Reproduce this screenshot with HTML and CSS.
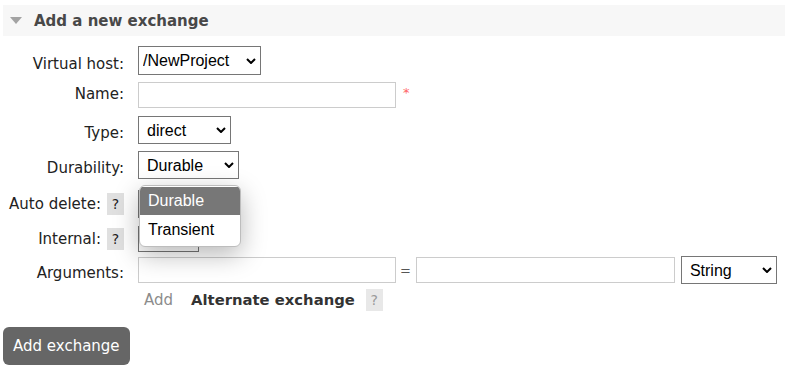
FILE: index.html
```html
<!DOCTYPE html>
<html lang="en">
<head>
    <meta charset="UTF-8">
    <meta name="viewport" content="width=device-width, initial-scale=1.0">
    <title>Exchanges - Add a new exchange</title>
    <link rel="stylesheet" href="styles.css">
</head>
<body>
    <div class="section">
        <div class="section-title">
            <svg class="toggle" width="12" height="7" viewBox="0 0 12 7"><polygon points="0,0 12,0 6,7" fill="#a3a3a3"/></svg>
            <h2>Add a new exchange</h2>
        </div>

        <form class="form">
            <label class="label label-low" for="vhost">Virtual host:</label>
            <div class="field">
                <span class="select">
                    <select id="vhost" class="w-vhost"><option>/NewProject</option></select>
                    <svg class="chevron" width="10" height="6" viewBox="0 0 10 6"><polyline points="1,1 5,5 9,1"/></svg>
                </span>
            </div>

            <label class="label label-high" for="name">Name:</label>
            <div class="field">
                <input type="text" id="name" class="text">
                <span class="mandatory">*</span>
            </div>

            <label class="label label-low" for="type">Type:</label>
            <div class="field">
                <span class="select">
                    <select id="type" class="w-type"><option>direct</option><option>fanout</option><option>headers</option><option>topic</option></select>
                    <svg class="chevron" width="10" height="6" viewBox="0 0 10 6"><polyline points="1,1 5,5 9,1"/></svg>
                </span>
            </div>

            <label class="label label-low" for="durable">Durability:</label>
            <div class="field">
                <span class="select">
                    <select id="durable" class="w-durable"><option>Durable</option><option>Transient</option></select>
                    <svg class="chevron" width="10" height="6" viewBox="0 0 10 6"><polyline points="1,1 5,5 9,1"/></svg>
                    <!-- open option list -->
                    <ul class="popup">
                        <li class="selected">Durable</li>
                        <li>Transient</li>
                    </ul>
                </span>
            </div>

            <div class="label">
                <label for="autodelete">Auto delete:</label>
                <span class="help">?</span>
            </div>
            <div class="field">
                <select id="autodelete" class="w-bool"><option>No</option><option>Yes</option></select>
            </div>

            <div class="label">
                <label for="internal">Internal:</label>
                <span class="help">?</span>
            </div>
            <div class="field">
                <select id="internal" class="w-bool w-short"><option>No</option><option>Yes</option></select>
            </div>

            <label class="label label-low" for="arg-key">Arguments:</label>
            <div class="field">
                <input type="text" id="arg-key" class="text">
                <span class="equals">=</span>
                <input type="text" id="arg-value" class="text">
                <span class="select">
                    <select id="arg-type" class="w-argtype"><option>String</option><option>Number</option><option>Boolean</option><option>List</option></select>
                    <svg class="chevron" width="10" height="6" viewBox="0 0 10 6"><polyline points="1,1 5,5 9,1"/></svg>
                </span>
            </div>

            <div></div>
            <div class="field add-row">
                <span class="add-link">Add</span>
                <span class="arg-name">Alternate exchange</span>
                <span class="help help-light">?</span>
            </div>
        </form>

        <button class="button" type="button">Add exchange</button>
    </div>
</body>
</html>
```

FILE: styles.css
```css
body {
    margin: 0;
    padding: 5px 0 0 3px;
    font-family: "DejaVu Sans", Verdana, sans-serif;
    font-size: 15px;
    color: #222;
    background: #fff;
}
.section-title {
    display: flex;
    align-items: center;
    gap: 12px;
    height: 31px;
    padding-left: 7px;
    background: #f7f7f7;
}
.section-title h2 {
    margin: 0;
    font-size: 15px;
    font-weight: bold;
    color: #484848;
}
.form {
    display: grid;
    grid-template-columns: 121px 1fr;
    grid-template-rows: 35px 34px 36px 34px 44px 26px 36px 23px;
    column-gap: 14px;
    align-items: center;
    padding-top: 7px;
    margin: 0;
}
.label {
    display: flex;
    justify-content: flex-end;
    align-items: center;
    gap: 6px;
    text-align: right;
}
.label-low {
    padding-top: 6px;
}
.label-high {
    padding-bottom: 2px;
}
.field {
    display: flex;
    align-items: center;
}
.select {
    position: relative;
    display: inline-flex;
}
select {
    appearance: none;
    -webkit-appearance: none;
    margin: 0;
    height: 28px;
    padding: 0 0 0 8px;
    border: 1px solid #767676;
    border-radius: 0;
    background: #fff;
    font-family: "Liberation Sans", Arial, sans-serif;
    font-size: 16px;
    color: #000;
}
.w-vhost {
    width: 123px;
    height: 29px;
    padding-left: 4px;
}
.w-type {
    width: 93px;
}
.w-durable {
    width: 101px;
}
.w-bool {
    width: 61px;
}
.w-short {
    height: 26px;
}
.w-argtype {
    width: 96px;
}
.chevron {
    position: absolute;
    right: 5px;
    top: 50%;
    margin-top: -3px;
    fill: none;
    stroke: #000;
    stroke-width: 2;
    pointer-events: none;
}
.text {
    box-sizing: border-box;
    width: 258px;
    height: 26px;
    margin: 0;
    border: 1px solid #ccc;
    font-size: 14px;
}
.mandatory {
    margin-left: 7px;
    margin-top: -6px;
    color: #f66;
    font-size: 13px;
}
.equals {
    margin: 0 5px 0 4px;
    color: #555;
    font-size: 13px;
}
#arg-value {
    width: 259px;
    margin-right: 6px;
}
.help {
    display: inline-flex;
    justify-content: center;
    align-items: center;
    width: 17px;
    height: 22px;
    background: #e0e0e0;
    color: #222;
    font-size: 14px;
}
.help-light {
    background: #e8e8e8;
    color: #999;
}
.add-row {
    padding-left: 6px;
}
.add-link {
    color: #8c8c8c;
    margin-right: 18px;
}
.arg-name {
    font-size: 14.8px;
    font-weight: bold;
    color: #333;
    margin-right: 11px;
}
.popup {
    position: absolute;
    left: 1px;
    top: 34px;
    width: 100px;
    margin: 0;
    padding: 1px 0 2px;
    list-style: none;
    background: #fff;
    border: 1px solid #bdbdbd;
    border-radius: 6px;
    overflow: hidden;
    box-shadow: 0 8px 26px rgba(0, 0, 0, 0.28);
    font-family: "Liberation Sans", Arial, sans-serif;
    font-size: 16px;
    color: #000;
    z-index: 2;
}
.popup li {
    height: 28px;
    line-height: 28px;
    padding-left: 8px;
}
.popup li + li {
    height: 29px;
    line-height: 29px;
}
.popup .selected {
    background: #777;
    color: #fff;
}
.button {
    margin-top: 16px;
    height: 38px;
    padding: 0 10px;
    border: none;
    border-radius: 6px;
    background: #666;
    color: #fff;
    font-family: "DejaVu Sans", Verdana, sans-serif;
    font-size: 15px;
}
```
